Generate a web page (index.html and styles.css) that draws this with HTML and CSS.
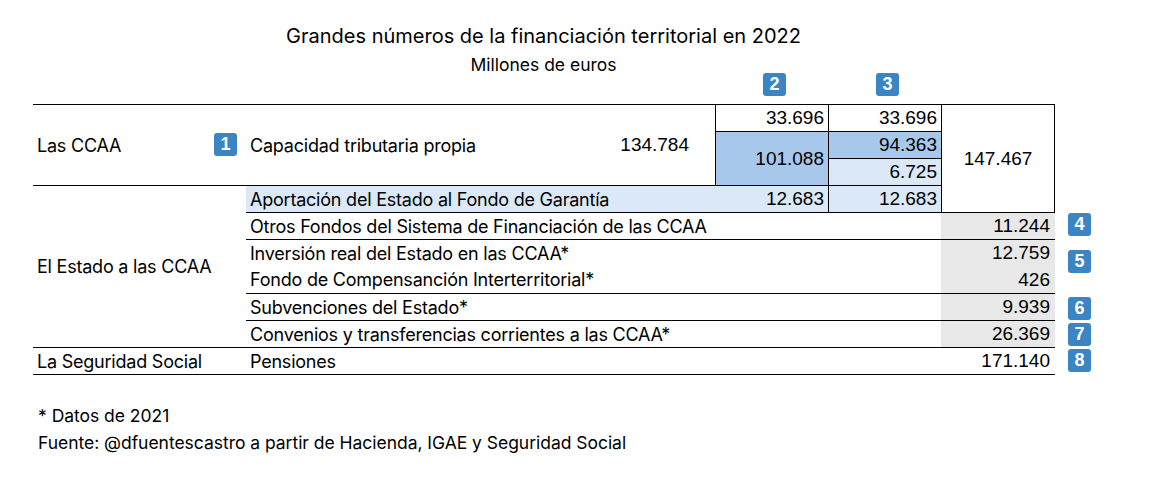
FILE: index.html
```html
<!DOCTYPE html>
<html lang="es">
<head>
<meta charset="utf-8">
<title>Grandes números de la financiación territorial en 2022</title>
<link rel="stylesheet" href="styles.css">
</head>
<body>
<div class="sheet">
  <header class="heading">
    <h1 class="title">Grandes números de la financiación territorial en 2022</h1>
    <p class="subtitle">Millones de euros</p>
  </header>

  <div class="grid">
    <span class="badge top colD">2</span>
    <span class="badge top colE">3</span>

    <!-- Las CCAA -->
    <div class="cell group r2-5 bt">Las CCAA</div>
    <span class="badge b1 r2-5">1</span>
    <div class="cell label r2-5 colB bt">Capacidad tributaria propia</div>
    <div class="cell num r2-5 colC bt pad-wide">134.784</div>
    <div class="cell num r2 colD bt bl">33.696</div>
    <div class="cell num r3-5 colD bt bl mid">101.088</div>
    <div class="cell num r2 colE bt bl">33.696</div>
    <div class="cell num r3 colE bt bl mid">94.363</div>
    <div class="cell num r4 colE bt bl light">6.725</div>
    <div class="cell num center r2-6 colF bt bl br">147.467</div>

    <!-- El Estado a las CCAA -->
    <div class="cell group r5-11 bt">El Estado a las CCAA</div>
    <div class="cell label r5 colBC bt light">Aportación del Estado al Fondo de Garantía</div>
    <div class="cell num r5 colD bt light">12.683</div>
    <div class="cell num r5 colE bt bl light">12.683</div>

    <div class="cell label r6 colBE bt">Otros Fondos del Sistema de Financiación de las CCAA</div>
    <div class="cell num r6 colF bt grey">11.244</div>
    <span class="badge side r6 b4">4</span>

    <div class="cell label r7 colBE bt">Inversión real del Estado en las CCAA*</div>
    <div class="cell num r7 colF bt grey">12.759</div>
    <span class="badge side r7-9 b5">5</span>

    <div class="cell label r8 colBE">Fondo de Compensanción Interterritorial*</div>
    <div class="cell num r8 colF grey">426</div>

    <div class="cell label r9 colBE bt">Subvenciones del Estado*</div>
    <div class="cell num r9 colF bt grey">9.939</div>
    <span class="badge side r9 b6">6</span>

    <div class="cell label r10 colBE bt">Convenios y transferencias corrientes a las CCAA*</div>
    <div class="cell num r10 colF bt grey">26.369</div>
    <span class="badge side r10 b7">7</span>

    <!-- La Seguridad Social -->
    <div class="cell group r11 bt bb">La Seguridad Social</div>
    <div class="cell label r11 colBE bt bb">Pensiones</div>
    <div class="cell num r11 colF bt bb">171.140</div>
    <span class="badge side r11 b8">8</span>
  </div>

  <footer class="notes">
    <p class="note">* Datos de 2021</p>
    <p class="note">Fuente: @dfuentescastro a partir de Hacienda, IGAE y Seguridad Social</p>
  </footer>
</div>
</body>
</html>
```

FILE: styles.css
```css
* { box-sizing: border-box; }

html, body {
  margin: 0;
  padding: 0;
  background: #ffffff;
  color: #000000;
}

body {
  font-family: "Inter", "Liberation Sans", sans-serif;
}

.sheet {
  width: 1153px;
  padding: 24px 0 0 33px;
}

.heading {
  width: 1021px;
  text-align: center;
}

.title {
  margin: 0;
  font-size: 20px;
  font-weight: 400;
  line-height: 24px;
  letter-spacing: 0;
}

.subtitle {
  margin: 8px 0 0;
  font-size: 17.5px;
  line-height: 18px;
  letter-spacing: 0;
}

.grid {
  display: grid;
  grid-template-columns: 213px 354px 115px 113px 113px 114px 46px;
  grid-template-rows: 30px repeat(9, 27px) 28px;
}

/* rows */
.r2 { grid-row: 2; }
.r3 { grid-row: 3; }
.r4 { grid-row: 4; }
.r5 { grid-row: 5; }
.r6 { grid-row: 6; }
.r7 { grid-row: 7; }
.r8 { grid-row: 8; }
.r9 { grid-row: 9; }
.r10 { grid-row: 10; }
.r11 { grid-row: 11; }
.r2-5 { grid-row: 2 / 5; }
.r3-5 { grid-row: 3 / 5; }
.r2-6 { grid-row: 2 / 6; }
.r5-11 { grid-row: 5 / 11; }
.r7-9 { grid-row: 7 / 9; }

/* columns */
.group { grid-column: 1; }
.colB { grid-column: 2; }
.colC { grid-column: 3; }
.colD { grid-column: 4; }
.colE { grid-column: 5; }
.colF { grid-column: 6; }
.colBC { grid-column: 2 / 4; }
.colBE { grid-column: 2 / 6; }
.side { grid-column: 7; }

.cell {
  display: flex;
  align-items: center;
  white-space: nowrap;
  font-size: 18px;
  letter-spacing: -0.22px;
}

.group { padding-left: 4px; }
.label { padding-left: 4px; }

.num {
  justify-content: flex-end;
  padding-right: 4px;
  font-family: "Liberation Sans", Arial, sans-serif;
  font-size: 19px;
  letter-spacing: 0;
}
.colF.num { padding-right: 5px; }
.num.center { justify-content: center; padding-right: 0; }
.pad-wide { padding-right: 26px; }

.bt { border-top: 1px solid #000; }
.bb { border-bottom: 1px solid #000; }
.bl { border-left: 1px solid #000; }
.br { border-right: 1px solid #000; }

.mid { background: #a7c8ea; }
.light { background: #dae8f7; }
.grey { background: #e8e8e8; }

/* badges */
.badge {
  width: 23px;
  height: 23px;
  border-radius: 3px;
  background: #3b85c4;
  color: #ffffff;
  font-family: "Liberation Sans", Arial, sans-serif;
  font-weight: 700;
  font-size: 18px;
  line-height: 23px;
  text-align: center;
}

.top { grid-row: 1; align-self: start; margin-left: 48px; margin-top: -1px; }
.b1 { grid-column: 1; justify-self: end; align-self: center; margin-right: 9px; }
.side { margin-left: 13px; align-self: start; }
.b4 { margin-top: 1px; }
.b5 { margin-top: 11px; }
.b6 { margin-top: 4px; }
.b7 { margin-top: 3px; }
.b8 { margin-top: 2px; }

.notes {
  margin-top: 27px;
  padding-left: 5px;
}

.note {
  margin: 0;
  font-size: 17.5px;
  line-height: 27px;
  letter-spacing: -0.03px;
}
```
